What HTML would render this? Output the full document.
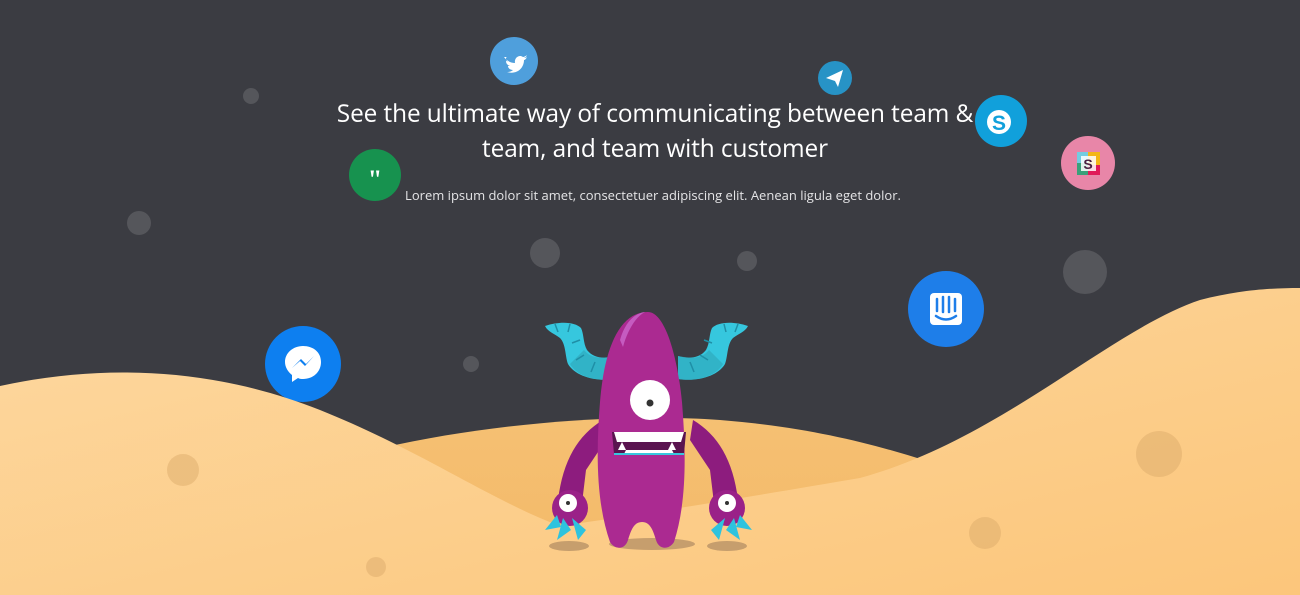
<!DOCTYPE html>
<html><head><meta charset="utf-8"><style>
html,body{margin:0;padding:0;background:#3b3c42;overflow:hidden}
#w{position:relative;width:1300px;height:595px;background:#3b3c42;font-family:"Open Sans","Liberation Sans",sans-serif}
svg{position:absolute;left:0;top:0}
.h{position:absolute;left:320px;width:670px;top:96px;text-align:center;color:#fff;font-size:24.4px;line-height:35px;letter-spacing:-0.1px}
.p{position:absolute;left:330px;width:646px;top:186px;text-align:center;color:#e4e4e6;font-size:13px;line-height:18px}
</style></head><body><div id="w">
<svg width="1300" height="595" viewBox="0 0 1300 595">
<defs>
<linearGradient id="f" x1="0" y1="0" x2="1" y2="1"><stop offset="0" stop-color="#fdd8a0"/><stop offset="1" stop-color="#fcc67b"/></linearGradient>
<linearGradient id="b" x1="0" y1="0" x2="0" y2="1"><stop offset="0" stop-color="#f5c073"/><stop offset="1" stop-color="#f4b866"/></linearGradient>
<clipPath id="bc"><path d="M648 312c-30 0-44 40-48 90-4 50-4 100 10 140 5 8 15 8 18-2 3-10 6-18 14-18s11 8 14 18c3 10 13 10 18 2 13-40 12-90 8-140-5-50-18-90-34-90z"/></clipPath>
</defs>
<g fill="#55565b">
<circle cx="251" cy="96" r="8"/><circle cx="139" cy="223" r="12"/><circle cx="545" cy="253" r="15"/>
<circle cx="747" cy="261" r="10"/><circle cx="1085" cy="272" r="22"/><circle cx="471" cy="364" r="8"/>
</g>
<circle cx="514" cy="61" r="24" fill="#4f9fdc"/>
<path d="M504 57c3 4 7 6 11 6 -1-5 4-9 8-6 1 0 3-1 4-2-1 2-1 2-3 3 2 0 3-1 3-1-1 2-2 3-3 3 0 8-7 15-17 12 3 0 5-1 6-2-3 0-5-2-5-4 1 0 2 0 2 0-3-1-4-3-4-5 1 0 2 1 2 1-2-2-3-4-1-5z" fill="#fff"/>
<circle cx="835" cy="78" r="17" fill="#2793c6"/>
<path d="M826 78l17-8-5 17-3-6z" fill="#fff"/>
<circle cx="1001" cy="121" r="26" fill="#11a0db"/>
<circle cx="999" cy="122" r="12" fill="#fff"/>
<text x="999" y="130" text-anchor="middle" font-family="Liberation Sans" font-weight="bold" font-size="21" fill="#11a0db">S</text>
<circle cx="1088" cy="163" r="27" fill="#e886a8"/>
<rect x="1077" y="152" width="23" height="23" fill="#f4b616"/><rect x="1077" y="152" width="11" height="11" fill="#74cce0"/><rect x="1077" y="163" width="11" height="12" fill="#3aa07a"/><rect x="1088" y="165" width="12" height="10" fill="#e01a59"/>
<rect x="1081" y="156" width="15" height="15" fill="#fff" opacity="0.85"/>
<text x="1088" y="169" text-anchor="middle" font-family="Liberation Sans" font-weight="bold" font-size="14" fill="#4a2040">S</text>
<circle cx="375" cy="175" r="26" fill="#17924f"/>
<text x="375" y="188" text-anchor="middle" font-family="Liberation Serif" font-weight="bold" font-size="26" fill="#fff">"</text>
<circle cx="946" cy="309" r="38" fill="#1e7ee9"/>
<rect x="930" y="293" width="32" height="32" rx="4" fill="#fff"/>
<g stroke="#1e7ee9" stroke-width="2.5" fill="none" stroke-linecap="round"><path d="M937 299v12M943 297v15M949 297v15M955 299v12M936 316q10 7 20 0"/></g>
<circle cx="303" cy="364" r="38" fill="#0d7ff0"/>
<path d="M303 346c-10 0-18 7-18 16 0 5 3 10 7 13v7l6-4c2 1 3 1 5 1 10 0 18-7 18-17s-8-16-18-16z" fill="#fff"/>
<path d="M292 368l9-9 5 5 8-8-9 10-5-5z" fill="#0d7ff0"/>
<path d="M300 470C440 425 610 412 720 420C820 428 890 448 960 472L960 595L300 595Z" fill="url(#b)"/>
<path d="M0 386C110 362 220 370 320 410C420 450 490 500 560 526C640 515 760 495 860 478C1000 440 1110 330 1200 300C1240 290 1270 288 1300 288L1300 595L0 595Z" fill="url(#f)"/>
<g fill="#d9a868" opacity="0.45">
<circle cx="183" cy="470" r="16"/><circle cx="1159" cy="454" r="23"/><circle cx="985" cy="533" r="16"/><circle cx="376" cy="567" r="10"/>
</g>
<g>
<ellipse cx="652" cy="544" rx="43" ry="6" fill="#b89266" opacity="0.8"/>
<ellipse cx="569" cy="546" rx="20" ry="5" fill="#b89266" opacity="0.8"/>
<ellipse cx="727" cy="546" rx="20" ry="5" fill="#b89266" opacity="0.8"/>
<path d="M545 326c15-5 30-4 36 2 3 6 2 15 6 22 8 10 20 8 28 6l0 23c-20 3-40-3-47-15-3-8-2-20-8-26-5-4-12-6-15-12z" fill="#36c7de"/>
<path d="M748 326c-15-5-30-4-36 2-3 6-2 15-6 22-8 10-20 8-28 6l0 23c20 3 40-3 47-15 3-8 2-20 8-26 5-4 12-6 15-12z" fill="#36c7de"/>
<path d="M584 350c8 10 20 8 31 6l0 23c-20 3-38-3-45-15z" fill="#2ea5b8" opacity="0.6"/>
<path d="M709 350c-8 10-20 8-31 6l0 23c20 3 38-3 45-15z" fill="#2ea5b8" opacity="0.6"/>
<g stroke="#1f8fa6" stroke-width="1.5" fill="none"><path d="M555 324l3 8M570 324l-2 8M580 340l-8 3M584 355l-8 5M595 362l-4 10M704 340l8 3M700 355l8 5M690 362l4 10M738 324l-3 8M724 324l2 8"/></g>
<path d="M603 420c-25 15-40 40-45 80l-3 15 25 5 6-50 20-30z" fill="#8d1c7e"/>
<path d="M693 420c25 15 40 40 45 80l3 15-25 5-6-50-20-30z" fill="#8d1c7e"/>
<circle cx="570" cy="508" r="18" fill="#9a2188"/><circle cx="727" cy="508" r="18" fill="#9a2188"/>
<circle cx="568" cy="503" r="9" fill="#fff"/><circle cx="568" cy="503" r="2" fill="#333"/>
<circle cx="727" cy="503" r="9" fill="#fff"/><circle cx="727" cy="503" r="2" fill="#333"/>
<g fill="#2ec3de"><path d="M545 530l12-15 4 12z"/><path d="M557 540l6-22 8 12z"/><path d="M578 540l-6-22 14 12z"/><path d="M752 530l-12-15-4 12z"/><path d="M740 540l-6-22-8 12z"/><path d="M719 540l6-22-14 12z"/></g>
<path d="M648 312c-30 0-44 40-48 90-4 50-4 100 10 140 5 8 15 8 18-2 3-10 6-18 14-18s11 8 14 18c3 10 13 10 18 2 13-40 12-90 8-140-5-50-18-90-34-90z" fill="#ab2a91"/>
<g clip-path="url(#bc)"><path d="M684 330c12 40 14 100 8 150-3 30-8 50-14 70l30 0 0-220z" fill="#7d1875"/></g>
<path d="M620 340c5-18 15-27 25-28-10 5-18 20-22 35z" fill="#c55bc0"/>
<circle cx="650" cy="400" r="20" fill="#fff"/><path d="M668 392a20 20 0 0 1-30 24a20 20 0 0 0 30-24z" fill="#c9eefa"/><circle cx="650" cy="403" r="3.5" fill="#333"/>
<path d="M612 432h74l-2 22h-70z" fill="#5a1450"/>
<path d="M614 432h70l-3 10h-64z" fill="#fff"/>
<path d="M618 450l4-8 4 8zM676 450l-4-8-4 8z" fill="#fff"/>
<path d="M624 454h50l-2-4h-46z" fill="#fff"/>
<path d="M614 454h70" stroke="#36c7de" stroke-width="2"/>
</g>
</svg>
<div class="h">See the ultimate way of communicating between team &amp; team, and team with customer</div>
<div class="p">Lorem ipsum dolor sit amet, consectetuer adipiscing elit. Aenean ligula eget dolor.</div>
</div></body></html>
